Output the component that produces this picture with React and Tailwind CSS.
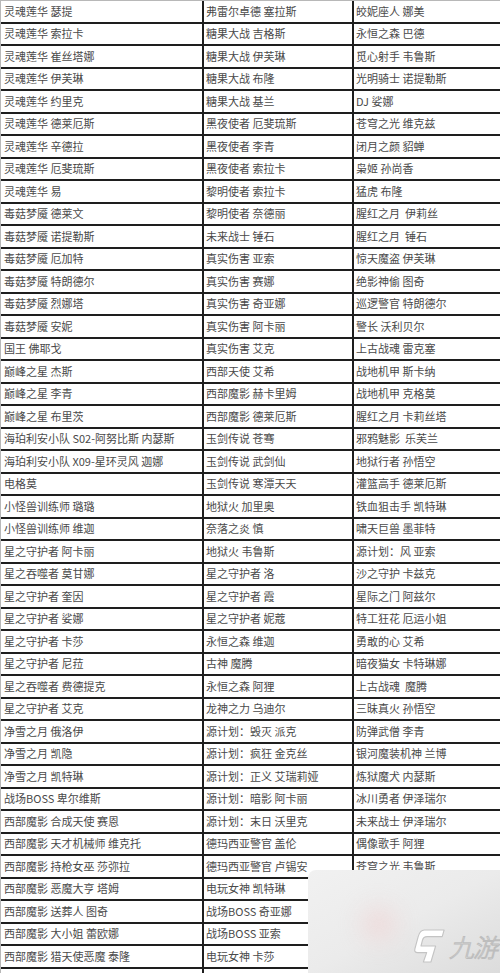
const rows = [
  ["灵魂莲华 瑟提", "弗雷尔卓德 塞拉斯", "皎妮座人 娜美"],
  ["灵魂莲华 索拉卡", "糖果大战 吉格斯", "永恒之森 巴德"],
  ["灵魂莲华 崔丝塔娜", "糖果大战 伊芙琳", "觅心射手 韦鲁斯"],
  ["灵魂莲华 伊芙琳", "糖果大战 布隆", "光明骑士 诺提勒斯"],
  ["灵魂莲华 约里克", "糖果大战 基兰", "DJ 娑娜"],
  ["灵魂莲华 德莱厄斯", "黑夜使者 厄斐琉斯", "苍穹之光 维克兹"],
  ["灵魂莲华 辛德拉", "黑夜使者 李青", "闭月之颜 貂蝉"],
  ["灵魂莲华 厄斐琉斯", "黑夜使者 索拉卡", "枭姬 孙尚香"],
  ["灵魂莲华 易", "黎明使者 索拉卡", "猛虎 布隆"],
  ["毒菇梦魇 德莱文", "黎明使者 奈德丽", "腥红之月  伊莉丝"],
  ["毒菇梦魇 诺提勒斯", "未来战士 锤石", "腥红之月  锤石"],
  ["毒菇梦魇 厄加特", "真实伤害 亚索", "惊天魔盗 伊芙琳"],
  ["毒菇梦魇 特朗德尔", "真实伤害 赛娜", "绝影神偷 图奇"],
  ["毒菇梦魇 烈娜塔", "真实伤害 奇亚娜", "巡逻警官 特朗德尔"],
  ["毒菇梦魇 安妮", "真实伤害 阿卡丽", "警长 沃利贝尔"],
  ["国王 佛耶戈", "真实伤害 艾克", "上古战魂 雷克塞"],
  ["巅峰之星 杰斯", "西部天使 艾希", "战地机甲 斯卡纳"],
  ["巅峰之星 李青", "西部魔影 赫卡里姆", "战地机甲 克格莫"],
  ["巅峰之星 布里茨", "西部魔影 德莱厄斯", "腥红之月 卡莉丝塔"],
  ["海珀利安小队 S02-阿努比斯 内瑟斯", "玉剑传说 苍骞", "邪鸦魅影  乐芙兰"],
  ["海珀利安小队 X09-星环灵风 迦娜", "玉剑传说 武剑仙", "地狱行者 孙悟空"],
  ["电格莫", "玉剑传说 寒潭天天", "灌篮高手 德莱厄斯"],
  ["小怪兽训练师 璐璐", "地狱火 加里奥", "铁血狙击手 凯特琳"],
  ["小怪兽训练师 维迦", "奈落之炎 慎", "啸天巨兽 墨菲特"],
  ["星之守护者 阿卡丽", "地狱火 韦鲁斯", "源计划：风 亚索"],
  ["星之吞噬者 莫甘娜", "星之守护者 洛", "沙之守护 卡兹克"],
  ["星之守护者 奎因", "星之守护者 霞", "星际之门 阿兹尔"],
  ["星之守护者 娑娜", "星之守护者 妮蔻", "特工狂花 厄运小姐"],
  ["星之守护者 卡莎", "永恒之森 维迦", "勇敢的心 艾希"],
  ["星之守护者 尼菈", "古神 魔腾", "暗夜猫女 卡特琳娜"],
  ["星之吞噬者 费德提克", "永恒之森 阿狸", "上古战魂  魔腾"],
  ["星之守护者 艾克", "龙神之力 乌迪尔", "三昧真火 孙悟空"],
  ["净雪之月 俄洛伊", "源计划：毁灭 派克", "防弹武僧 李青"],
  ["净雪之月 凯隐", "源计划：疯狂 金克丝", "银河魔装机神 兰博"],
  ["净雪之月 凯特琳", "源计划：正义 艾瑞莉娅", "炼狱魔犬 内瑟斯"],
  ["战场BOSS 卑尔维斯", "源计划：暗影 阿卡丽", "冰川勇者 伊泽瑞尔"],
  ["西部魔影 合成天使 赛恩", "源计划：末日 沃里克", "未来战士 伊泽瑞尔"],
  ["西部魔影 天才机械师 维克托", "德玛西亚警官 盖伦", "偶像歌手 阿狸"],
  ["西部魔影 持枪女巫 莎弥拉", "德玛西亚警官 卢锡安", "苍穹之光 韦鲁斯"],
  ["西部魔影 恶魔大亨 塔姆", "电玩女神 凯特琳", ""],
  ["西部魔影 送葬人 图奇", "战场BOSS 奇亚娜", ""],
  ["西部魔影 大小姐 蕾欧娜", "战场BOSS 亚索", ""],
  ["西部魔影 猎天使恶魔 泰隆", "电玩女神 卡莎", ""],
  ["", "", ""],
]

// watermark in the bottom right corner, sits over the table
const Watermark = () => (
  <div className="absolute left-[308px] top-[870px] right-0 bottom-0 overflow-hidden rounded-tl-[8px] bg-gradient-to-br from-[#f1f1f1] via-[#ebebeb] to-[#dcdcdc] flex items-end justify-end pr-[3px] pb-[9px]">
    <div className="absolute left-[55px] top-[38px] w-[32px] h-[32px] rounded-full bg-[#f0d2d2] blur-md opacity-70" />
    <div className="relative flex items-center gap-[3px]">
      <svg width="33" height="36" viewBox="0 0 35 38">
        <path
          d="M12 2 H33 L31 9 H15 Q11 9 10 13 L8.5 19 H24 L19 36 H11 L14.5 26 H5 Q1 26 2 22 L5.5 9 Q7.5 2 12 2 Z"
          fill="#ffffff"
          stroke="#c4c4c4"
          strokeWidth="1.2"
          strokeLinejoin="round"
        />
      </svg>
      <span className="italic text-[25px] leading-none font-light tracking-[-1px] text-white [-webkit-text-stroke:1px_#bdbdbd]">
        九游
      </span>
    </div>
  </div>
)

export default function App() {
  return (
    <div className="relative w-[500px] h-[973px] overflow-hidden bg-white font-['Noto_Sans_CJK_SC',sans-serif] text-[11px] text-[#4a4a4a]">
      <div className="border-t border-l border-[#b8b8b8]">
        {rows.map((r, i) => (
          <div key={i} className="grid grid-cols-[203px_150px_1fr] h-[22.5px] border-b-2 border-[#1e1e1e]">
            <div className="flex items-center pl-[3px] border-r-2 border-[#1e1e1e] whitespace-pre leading-none">{r[0]}</div>
            <div className="flex items-center pl-[2px] border-r-2 border-[#1e1e1e] whitespace-pre leading-none">{r[1]}</div>
            <div className="flex items-center pl-[2px] whitespace-pre leading-none">{r[2]}</div>
          </div>
        ))}
      </div>
      <Watermark />
    </div>
  )
}
